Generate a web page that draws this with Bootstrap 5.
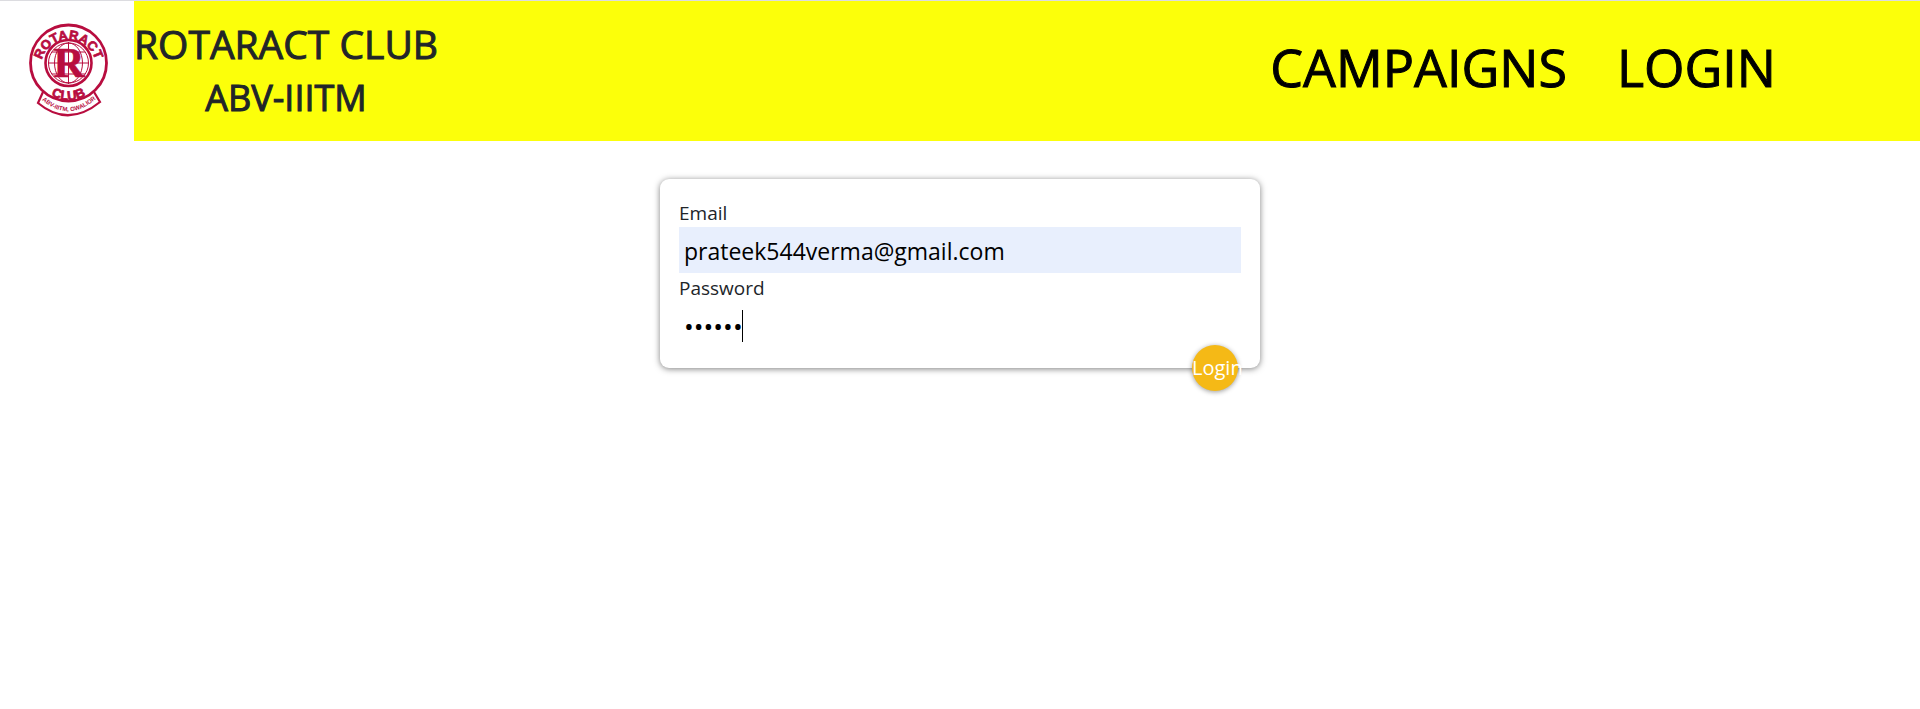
<!DOCTYPE html>
<html lang="en">
<head>
<meta charset="utf-8">
<meta name="viewport" content="width=device-width, initial-scale=1">
<title>Rotaract Club ABV-IIITM - Login</title>
<link href="https://cdn.jsdelivr.net/npm/bootstrap@5.3.0/dist/css/bootstrap.min.css" rel="stylesheet">
<style>
  body { font-family: "Open Sans", "Noto Sans", sans-serif; font-size: 19px; background: #fff; }
  .site-header { background: #fcff0a; border-top: 1px solid #dcdce0; }
  .brand-logo { width: 134px; height: 140px; background: #fff; }
  .brand-title, .brand-sub, .site-nav a { font-weight: 500; -webkit-text-stroke: 1px currentColor; }
  .brand-title { font-size: 39px; line-height: 46px; }
  .brand-sub { font-size: 36px; line-height: 46px; }
  .site-nav { gap: 50px; padding: 0 144px 8px 0; }
  .site-nav a { font-size: 52px; line-height: 62px; color: #000; text-decoration: none; }
  .login-card { max-width: 600px; margin-top: 38px; padding: 19px 19px 20px; border-radius: 9px; box-shadow: 0 1px 6px rgba(0,0,0,.5); position: relative; }
  .login-card label { line-height: 28px; padding-top: 1px; }
  .login-card input { height: 46px; font-size: 23px; padding: 6px 5px 4px; border: 0; outline: 0; color: #000; display: block; width: 100%; background: #fff; }
  .login-card input.filled { background: #e8effd; }
  .login-card input[type=password] { font-size: 26px; caret-color: transparent; }
  .pass-box { position: relative; }
  .pass-caret { position: absolute; left: 63px; top: 8px; width: 1px; height: 32px; background: #000; }
  .login-btn { position: absolute; right: 22px; bottom: -23px; width: 46px; height: 46px; padding: 0; border: 0; border-radius: 50%; background: #f5b916; color: #fff; font-size: 20px; text-align: left; white-space: nowrap; box-shadow: 0 1px 5px rgba(0,0,0,.4); }
</style>
</head>
<body class="min-vh-100">
<header class="site-header d-flex align-items-center justify-content-between">
  <div class="d-flex align-items-center">
    <div class="brand-logo">
      <svg width="134" height="140" viewBox="0 0 134 140" role="img" aria-label="Rotaract Club logo" fill="none" stroke="#b80d3f">
        <defs>
          <path id="arc-top" d="M41 66A27.500 27.500 0 1 1 96 66"/>
          <path id="arc-low" d="M34 70A35 35 0 0 0 103 70"/>
          <path id="arc-band" d="M42 99Q68 122 96 98"/>
        </defs>
        <path d="M43 91L38 102Q68 127 100 101L94 91" fill="#fff" stroke-width="2.200"/>
        <circle cx="68.500" cy="62" r="38" fill="#fff" stroke-width="2.800"/>
        <circle cx="68.500" cy="62" r="23" stroke-width="2.600"/>
        <g stroke-width="1">
          <circle cx="68.500" cy="62" r="20"/>
          <ellipse cx="68.500" cy="62" rx="14" ry="20"/>
          <path d="M48 62H89M52 51H85M52 73H85M68.500 41V83"/>
        </g>
        <g fill="#b80d3f" stroke="none" font-weight="700" text-anchor="middle">
          <text x="69" y="76" font-family="Liberation Serif, serif" font-size="43" stroke="#b80d3f" stroke-width="0.600">R</text>
          <g font-family="Liberation Sans, sans-serif">
            <text font-size="13" stroke="#b80d3f" stroke-width="0.700"><textPath href="#arc-top" startOffset="50%">ROTARACT</textPath></text>
            <text font-size="13" stroke="#b80d3f" stroke-width="0.700"><textPath href="#arc-low" startOffset="50%">CLUB</textPath></text>
            <text font-size="6"><textPath href="#arc-band" startOffset="50%">ABV-IIITM, GWALIOR</textPath></text>
          </g>
        </g>
      </svg>
    </div>
    <div class="text-center pt-2">
      <h1 class="brand-title mb-2">ROTARACT CLUB</h1>
      <h2 class="brand-sub mb-2">ABV-IIITM</h2>
    </div>
  </div>
  <nav class="site-nav d-flex">
    <a href="#campaigns">CAMPAIGNS</a>
    <a href="#login">LOGIN</a>
  </nav>
</header>
<main class="container">
  <form class="login-card mx-auto">
    <label for="email" class="d-block">Email</label>
    <input id="email" class="filled" type="email" value="prateek544verma@gmail.com">
    <label for="password" class="d-block">Password</label>
    <div class="pass-box">
      <input id="password" type="password" value="secret" autofocus>
      <span class="pass-caret"></span>
    </div>
    <button class="login-btn" type="submit">Login</button>
  </form>
</main>
<script src="https://cdn.jsdelivr.net/npm/bootstrap@5.3.0/dist/js/bootstrap.bundle.min.js"></script>
</body>
</html>
